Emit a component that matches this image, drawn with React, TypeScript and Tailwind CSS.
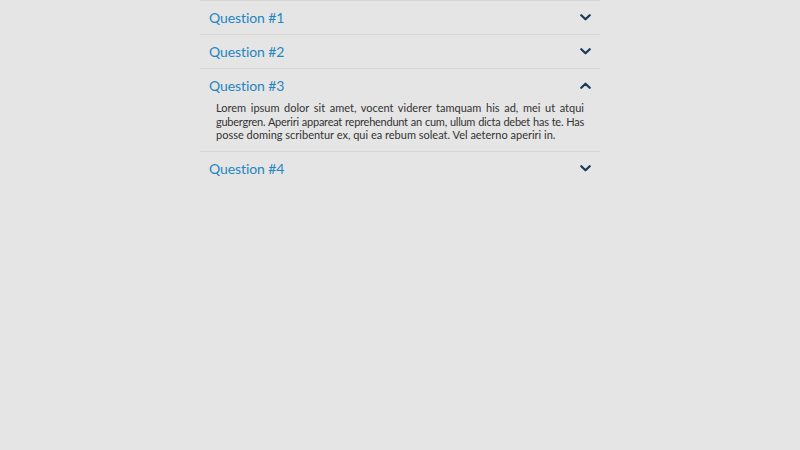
import React, { useState } from 'react';

// answer lines are set so the wrap follows the screenshot
const items = [
  { q: 'Question #1', a: [] as string[] },
  { q: 'Question #2', a: [] as string[] },
  {
    q: 'Question #3',
    a: [
      'Lorem ipsum dolor sit amet, vocent viderer tamquam his ad, mei ut atqui',
      'gubergren. Aperiri appareat reprehendunt an cum, ullum dicta debet has te. Has',
      'posse doming scribentur ex, qui ea rebum soleat. Vel aeterno aperiri in.',
    ],
  },
  { q: 'Question #4', a: [] as string[] },
];

const lineClass = [
  'text-justify [text-align-last:justify]',
  'text-justify [text-align-last:justify] tracking-[-0.25px]',
  '',
];

const Chevron = ({ up }: { up: boolean }) => (
  <svg viewBox="0 0 12 8" className={`h-[7px] w-[11px] ${up ? 'rotate-180' : ''}`}>
    <path d="M1.2 1.4 L6 6 L10.8 1.4" fill="none" stroke="#1c3a5a" strokeWidth="2.6" strokeLinecap="round" strokeLinejoin="round" />
  </svg>
);

export default function App() {
  const [open, setOpen] = useState(2);

  return (
    <div className="min-h-[450px] w-full bg-[#e5e5e5]" style={{ fontFamily: 'Lato, "Open Sans", sans-serif' }}>
      <div className="mx-auto w-[400px]">
        {items.map((item, i) => (
          <div key={item.q} className="border-t border-[#d6d6d6]">
            <button
              onClick={() => setOpen(open === i ? -1 : i)}
              className="flex h-[33px] w-full items-center justify-between px-[9px] text-left"
            >
              <span className="text-[14px] tracking-[-0.1px] text-[#1f86c2]">{item.q}</span>
              <Chevron up={open === i} />
            </button>
            {open === i && (
              <div className="-mt-[1px] px-4 pb-[9px] text-[11px] leading-[13.5px] text-[#333333]">
                {item.a.map((line, j) => (
                  <p key={j} className={`whitespace-nowrap ${lineClass[j]}`}>
                    {line}
                  </p>
                ))}
              </div>
            )}
          </div>
        ))}
      </div>
    </div>
  );
}
